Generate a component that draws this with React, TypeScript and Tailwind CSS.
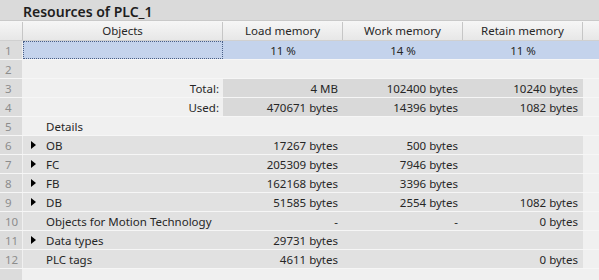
import React from "react";

type Row = {
  label: string;
  align?: "left" | "right";
  arrow?: boolean;
  load?: string;
  work?: string;
  retain?: string;
  kind: "selected" | "plain" | "summary" | "detail";
};

const rows: Row[] = [
  { label: "", kind: "selected", load: "11 %", work: "14 %", retain: "11 %" },
  { label: "", kind: "plain" },
  { label: "Total:", align: "right", kind: "summary", load: "4 MB", work: "102400 bytes", retain: "10240 bytes" },
  { label: "Used:", align: "right", kind: "summary", load: "470671 bytes", work: "14396 bytes", retain: "1082 bytes" },
  { label: "Details", kind: "plain" },
  { label: "OB", arrow: true, kind: "detail", load: "17267 bytes", work: "500 bytes" },
  { label: "FC", arrow: true, kind: "detail", load: "205309 bytes", work: "7946 bytes" },
  { label: "FB", arrow: true, kind: "detail", load: "162168 bytes", work: "3396 bytes" },
  { label: "DB", arrow: true, kind: "detail", load: "51585 bytes", work: "2554 bytes", retain: "1082 bytes" },
  { label: "Objects for Motion Technology", kind: "detail", load: "-", work: "-", retain: "0 bytes" },
  { label: "Data types", arrow: true, kind: "detail", load: "29731 bytes" },
  { label: "PLC tags", kind: "detail", load: "4611 bytes", retain: "0 bytes" },
];

const Arrow = () => (
  <svg width="5" height="8" viewBox="0 0 5 8" className="absolute left-[8px] top-[5px]">
    <path d="M0 0 L5 4 L0 8 Z" fill="#000" />
  </svg>
);

const ValueCell = ({ value, kind }: { value?: string; kind: Row["kind"] }) => {
  const bg =
    kind === "selected" ? "bg-[#c4d3ec] justify-center" :
    kind === "summary" ? "bg-[#d9d9d9] justify-end pr-[5px]" :
    kind === "detail" ? "bg-[#e1e1e1] justify-end pr-[5px]" : "";
  return <div className={`w-[120px] pt-px flex items-center ${bg}`}>{value}</div>;
};

export default function App() {
  return (
    <div
      className="w-[599px] h-[280px] overflow-hidden bg-[#f0f0f0] text-[#262626] text-[11.5px]"
      style={{ fontFamily: '"Noto Sans", "Open Sans", sans-serif' }}
    >
      <div className="h-[20px] bg-[#dadada] pl-[23px] pt-[2px] flex items-center text-[14px] font-semibold text-[#1e1e1e]">
        Resources of PLC_1
      </div>
      <div className="flex h-[21px] pt-px border-t border-[#c9c9c9] border-b border-b-[#d0d0d0] bg-gradient-to-b from-[#f6f6f6] to-[#e7e7e7]">
        <div className="w-[23px] border-r border-[#c6c6c6]" />
        <div className="w-[200px] border-r border-[#c6c6c6] flex items-center justify-center">Objects</div>
        <div className="w-[120px] border-r border-[#c6c6c6] flex items-center justify-center">Load memory</div>
        <div className="w-[120px] border-r border-[#c6c6c6] flex items-center justify-center">Work memory</div>
        <div className="w-[120px] border-r border-[#c6c6c6] flex items-center justify-center">Retain memory</div>
        <div className="flex-1" />
      </div>
      {rows.map((r, i) => (
        <div key={i} className="flex h-[19px] border-b border-[#f6f6f6]">
          <div className="w-[23px] pt-px border-r border-[#f0f0f0] bg-[#dcdcdc] text-[#8c8c8c] pl-[5px] flex items-center">
            {i + 1}
          </div>
          <div
            className={`relative w-[200px] pt-px flex items-center ${
              r.kind === "selected" ? "bg-[#c4d3ec] border border-dotted border-[#4a5f86]" :
              r.kind === "detail" ? "bg-[#e1e1e1]" : ""
            } ${r.align === "right" ? "justify-end pr-[4px]" : "pl-[23px]"}`}
          >
            {r.arrow && <Arrow />}
            {r.label}
          </div>
          <ValueCell value={r.load} kind={r.kind} />
          <ValueCell value={r.work} kind={r.kind} />
          <ValueCell value={r.retain} kind={r.kind} />
          <div className={`flex-1 ${r.kind === "selected" ? "bg-[#c4d3ec]" : ""}`} />
        </div>
      ))}
      <div className="flex h-[12px]">
        <div className="w-[23px] border-r border-[#f0f0f0] bg-[#dcdcdc]" />
      </div>
    </div>
  );
}
